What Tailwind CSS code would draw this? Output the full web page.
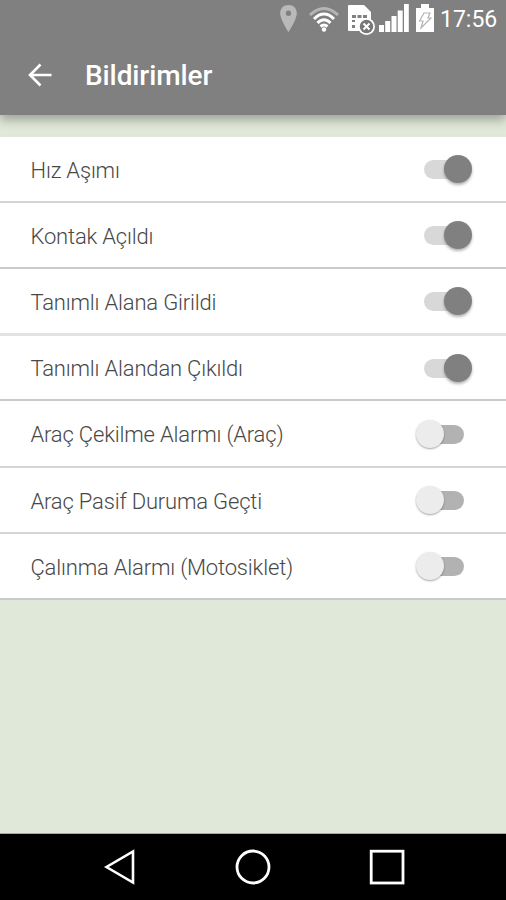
<!DOCTYPE html>
<html lang="tr">
<head>
<meta charset="utf-8">
<title>Bildirimler</title>
<script src="https://cdn.jsdelivr.net/npm/@tailwindcss/browser@4"></script>
</head>
<body class="bg-[#e0e9d9] font-['Roboto',sans-serif]">
<div class="flex h-[900px] w-[506px] flex-col overflow-hidden">
  <header class="relative h-[115px] shrink-0 bg-[#808080] shadow-[0_5px_10px_rgba(0,0,0,0.3)]">
    <div class="flex h-[38px] items-start justify-end pr-[9px] text-white">
      <svg class="mt-[5px] mr-[11px]" width="17" height="28" viewBox="0 0 17 28"><path fill="#b9b9b9" fill-rule="evenodd" d="M8.500 0C3.500 0 .2 3.500 .2 8.200 .2 14.500 8.500 27 8.500 27S16.800 14.500 16.800 8.200C16.800 3.500 13.500 0 8.500 0ZM8.500 5.500A2.700 2.700 0 1 1 8.500 10.900 2.700 2.700 0 0 1 8.500 5.500Z"/></svg>
      <svg class="mt-[6px] mr-[7px]" width="32" height="27" viewBox="0 0 32 27" fill="none" stroke-width="3"><path stroke="#b5b5b5" d="M2 9Q16-4 30 9"/><g stroke="#fff"><path d="M6 13Q16 3 26 13"/><path d="M9.500 17Q16 10.500 22.500 17"/><path d="M12.500 20.500Q16 17.500 19.500 20.500"/></g><circle cx="16" cy="23.500" r="2.200" fill="#fff"/></svg>
      <svg class="mt-[4px] mr-[4px]" width="28" height="32" viewBox="0 0 28 32"><path fill="#fff" d="M2 1H17L24 8V27H2Q1 27 1 26V2Q1 1 2 1Z"/><g fill="#808080"><path d="M5 11h4v3H5zM10.500 11h4v3h-4zM16 11h4v3h-4zM5 16h3v2H5zM5 21h3v3H5z"/></g><circle cx="19.500" cy="22.500" r="8.500" fill="#fff"/><circle cx="19.500" cy="22.500" r="6.700" fill="#777"/><path d="M16.500 19.500l6 6M22.500 19.500l-6 6" stroke="#fff" stroke-width="2"/></svg>
      <svg class="mt-[4px] mr-[7px]" width="30" height="28" viewBox="0 0 30 28" fill="#fff"><path d="M0 21h5v7H0zM6.200 17h5v11h-5zM12.500 12h5v16h-5zM18.700 6.500h5v21.500h-5zM25 0h4.800v28H25z"/></svg>
      <svg class="mt-[4px] mr-[6px]" width="18" height="28" viewBox="0 0 18 28"><path fill="#fff" d="M5 0h8v4h5v24H0V4h5z"/><path d="M8 9h6l-2 5h3L5 24l2-7H3.500z" fill="none" stroke="#b3b3b3" stroke-width="1.200"/></svg>
      <span class="mt-[6px] w-[57px] text-[23px] leading-[28px] whitespace-nowrap">17:56</span>
    </div>
    <div class="flex h-[76px] items-center pl-[28px] text-white">
      <svg class="mr-[33px] -mt-[2px]" width="24" height="24" viewBox="0 0 24 24" fill="none" stroke="#fff" stroke-width="2.600"><path d="M23.500 12H2M12.500 1.500L2 12l10.500 10.500"/></svg>
      <h1 class="text-[28px] leading-[32px] font-medium tracking-[-0.1px]">Bildirimler</h1>
    </div>
  </header>
  <main class="h-[719px] shrink-0 border-b border-[#a5aaa0] pt-[22px]">
    <ul class="text-[22px] leading-[30px] font-light tracking-[-0.18px] text-[#484848]">
      <li class="flex h-[66px] items-center justify-between border-b-2 border-[#d3d5d6] bg-white pr-[34px] pl-[30.5px]"><span class="pt-[3px]">Hız Aşımı</span><span class="relative h-7 w-12"><i class="absolute top-[5px] left-0 h-[19px] w-[38px] rounded-full bg-[#d8d8d8]"></i><i class="absolute top-0 right-0 size-7 rounded-full bg-[#808080] shadow-[0_2px_3px_rgba(0,0,0,0.3)]"></i></span></li>
      <li class="flex h-[66px] items-center justify-between border-b-2 border-[#c8cbcc] bg-white pr-[34px] pl-[30.5px]"><span class="pt-[3px]">Kontak Açıldı</span><span class="relative h-7 w-12"><i class="absolute top-[5px] left-0 h-[19px] w-[38px] rounded-full bg-[#d8d8d8]"></i><i class="absolute top-0 right-0 size-7 rounded-full bg-[#808080] shadow-[0_2px_3px_rgba(0,0,0,0.3)]"></i></span></li>
      <li class="flex h-[67px] items-center justify-between border-b-3 border-[#e2e2e2] bg-white pr-[34px] pl-[30.5px]"><span class="pt-[3px]">Tanımlı Alana Girildi</span><span class="relative h-7 w-12"><i class="absolute top-[5px] left-0 h-[19px] w-[38px] rounded-full bg-[#d8d8d8]"></i><i class="absolute top-0 right-0 size-7 rounded-full bg-[#808080] shadow-[0_2px_3px_rgba(0,0,0,0.3)]"></i></span></li>
      <li class="flex h-[65px] items-center justify-between border-b-2 border-[#c8cbcc] bg-white pr-[34px] pl-[30.5px]"><span class="pt-[2px]">Tanımlı Alandan Çıkıldı</span><span class="relative h-7 w-12"><i class="absolute top-[5px] left-0 h-[19px] w-[38px] rounded-full bg-[#d8d8d8]"></i><i class="absolute top-0 right-0 size-7 rounded-full bg-[#808080] shadow-[0_2px_3px_rgba(0,0,0,0.3)]"></i></span></li>
      <li class="flex h-[67px] items-center justify-between border-b-2 border-[#d3d5d6] bg-white pr-[42px] pl-[30.5px]"><span class="pt-[3px]">Araç Çekilme Alarmı (Araç)</span><span class="relative h-7 w-12"><i class="absolute top-[5px] right-0 h-[19px] w-[38px] rounded-full bg-[#b2b2b2]"></i><i class="absolute top-0 left-0 size-7 rounded-full bg-[#ececec] shadow-[0_1px_2px_rgba(0,0,0,0.35)]"></i></span></li>
      <li class="flex h-[66px] items-center justify-between border-b-2 border-[#d3d5d6] bg-white pr-[42px] pl-[30.5px]"><span class="pt-[3px]">Araç Pasif Duruma Geçti</span><span class="relative h-7 w-12"><i class="absolute top-[5px] right-0 h-[19px] w-[38px] rounded-full bg-[#b2b2b2]"></i><i class="absolute top-0 left-0 size-7 rounded-full bg-[#ececec] shadow-[0_1px_2px_rgba(0,0,0,0.35)]"></i></span></li>
      <li class="flex h-[66px] items-center justify-between border-b-2 border-[#c8cccb] bg-white pr-[42px] pl-[30.5px]"><span class="pt-[3px]">Çalınma Alarmı (Motosiklet)</span><span class="relative h-7 w-12"><i class="absolute top-[5px] right-0 h-[19px] w-[38px] rounded-full bg-[#b2b2b2]"></i><i class="absolute top-0 left-0 size-7 rounded-full bg-[#ececec] shadow-[0_1px_2px_rgba(0,0,0,0.35)]"></i></span></li>
    </ul>
  </main>
  <nav class="flex h-[66px] shrink-0 items-center justify-between bg-black pr-[101px] pl-[104px]">
    <svg width="32" height="36" viewBox="0 0 32 36" fill="none" stroke="#fff" stroke-width="2.600"><path d="M29 2.500V33.500L2.500 18Z"/></svg>
    <svg width="36" height="36" viewBox="0 0 36 36" fill="none" stroke="#fff" stroke-width="2.800"><circle cx="18" cy="18" r="16"/></svg>
    <svg width="36" height="36" viewBox="0 0 36 36" fill="none" stroke="#fff" stroke-width="2.800"><rect x="2.200" y="2.200" width="31.800" height="31.800"/></svg>
  </nav>
</div>
</body>
</html>
